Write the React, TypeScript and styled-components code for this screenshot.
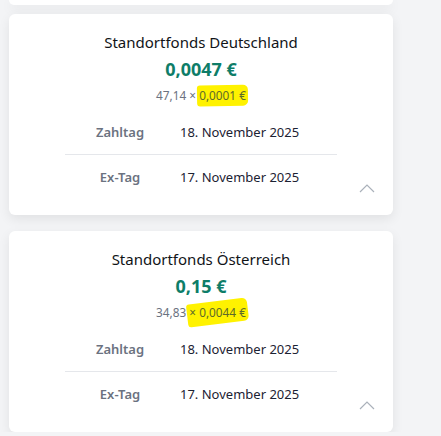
import React from "react";
import styled, { createGlobalStyle } from "styled-components";

const Global = createGlobalStyle`
  html, body { margin: 0; padding: 0; background: #f3f4f6; }
  body { font-family: "Noto Sans", "Open Sans", sans-serif; overflow: hidden; }
`;

const Page = styled.div`
  width: 384px;
  padding-left: 9px;
  display: flex;
  flex-direction: column;
`;

const PrevCardEdge = styled.div`
  height: 5px;
  background: #fff;
  border-radius: 0 0 6px 6px;
  box-shadow: 0 4px 12px rgba(0, 0, 0, 0.08);
  margin-bottom: 9px;
`;

const List = styled.div`
  display: flex;
  flex-direction: column;
  gap: 16px;
`;

const Card = styled.section`
  position: relative;
  background: #fff;
  border-radius: 6px;
  box-shadow: 0 4px 12px rgba(0, 0, 0, 0.08);
  padding: 18px 0 16px;
  display: flex;
  flex-direction: column;
  align-items: center;
`;

const Title = styled.h2`
  margin: 0;
  font-size: 15px;
  line-height: 20px;
  font-weight: 400;
  color: #111418;
`;

const Amount = styled.div`
  margin-top: 5px;
  font-size: 18px;
  line-height: 24px;
  font-weight: 700;
  color: #0e7d68;
`;

const Formula = styled.div`
  margin-top: 6px;
  font-size: 11.8px;
  line-height: 16px;
  color: #6b7280;
`;

const Mark = styled.span<{ $tilt: number; $grow: number }>`
  position: relative;
  z-index: 0;
  color: #5d6a2a;
  &::before {
    content: "";
    position: absolute;
    z-index: -1;
    left: -2px;
    right: -2px;
    top: ${(p) => -2 - p.$grow}px;
    bottom: ${(p) => -3 - p.$grow}px;
    background: #fff200;
    border-radius: 3px 5px 5px 3px;
    transform: rotate(${(p) => p.$tilt}deg);
  }
`;

const Table = styled.div`
  margin-top: 7px;
  width: 272px;
  display: flex;
  flex-direction: column;
`;

const Row = styled.div`
  display: grid;
  grid-template-columns: 110px 1fr;
  height: 44px;
  align-items: center;
  & + & {
    border-top: 1px solid #e5e7eb;
  }
`;

const Label = styled.div`
  text-align: center;
  font-size: 13px;
  font-weight: 600;
  color: #6b7280;
`;

const Value = styled.div`
  padding-left: 5px;
  font-size: 13px;
  color: #1c2233;
`;

const Toggle = styled.button`
  position: absolute;
  right: 18px;
  bottom: 22px;
  padding: 0;
  border: 0;
  background: none;
  display: flex;
  cursor: pointer;
`;

const Chevron = () => (
  <svg width="16" height="9" viewBox="0 0 16 9" fill="none">
    <polyline points="1,8 8,1 15,8" stroke="#aab1ba" strokeWidth="1.2" />
  </svg>
);

type Fund = {
  name: string;
  amount: string;
  shares: string;
  rate: string;
  markCross: boolean;
  tilt: number;
  grow: number;
  payDate: string;
  exDate: string;
};

const funds: Fund[] = [
  {
    name: "Standortfonds Deutschland",
    amount: "0,0047 €",
    shares: "47,14",
    rate: "0,0001 €",
    markCross: false,
    tilt: -1,
    grow: 0,
    payDate: "18. November 2025",
    exDate: "17. November 2025",
  },
  {
    name: "Standortfonds Österreich",
    amount: "0,15 €",
    shares: "34,83",
    rate: "0,0044 €",
    markCross: true,
    tilt: -7,
    grow: 1,
    payDate: "18. November 2025",
    exDate: "17. November 2025",
  },
];

export default function App() {
  return (
    <>
      <Global />
      <Page>
        <PrevCardEdge />
        <List>
          {funds.map((f) => (
            <Card key={f.name}>
              <Title>{f.name}</Title>
              <Amount>{f.amount}</Amount>
              <Formula>
                {f.markCross ? (
                  <>
                    {f.shares}{" "}
                    <Mark $tilt={f.tilt} $grow={f.grow}>
                      × {f.rate}
                    </Mark>
                  </>
                ) : (
                  <>
                    {f.shares} ×{" "}
                    <Mark $tilt={f.tilt} $grow={f.grow}>
                      {f.rate}
                    </Mark>
                  </>
                )}
              </Formula>
              <Table>
                <Row>
                  <Label>Zahltag</Label>
                  <Value>{f.payDate}</Value>
                </Row>
                <Row>
                  <Label>Ex-Tag</Label>
                  <Value>{f.exDate}</Value>
                </Row>
              </Table>
              <Toggle aria-label="Einklappen">
                <Chevron />
              </Toggle>
            </Card>
          ))}
        </List>
      </Page>
    </>
  );
}
